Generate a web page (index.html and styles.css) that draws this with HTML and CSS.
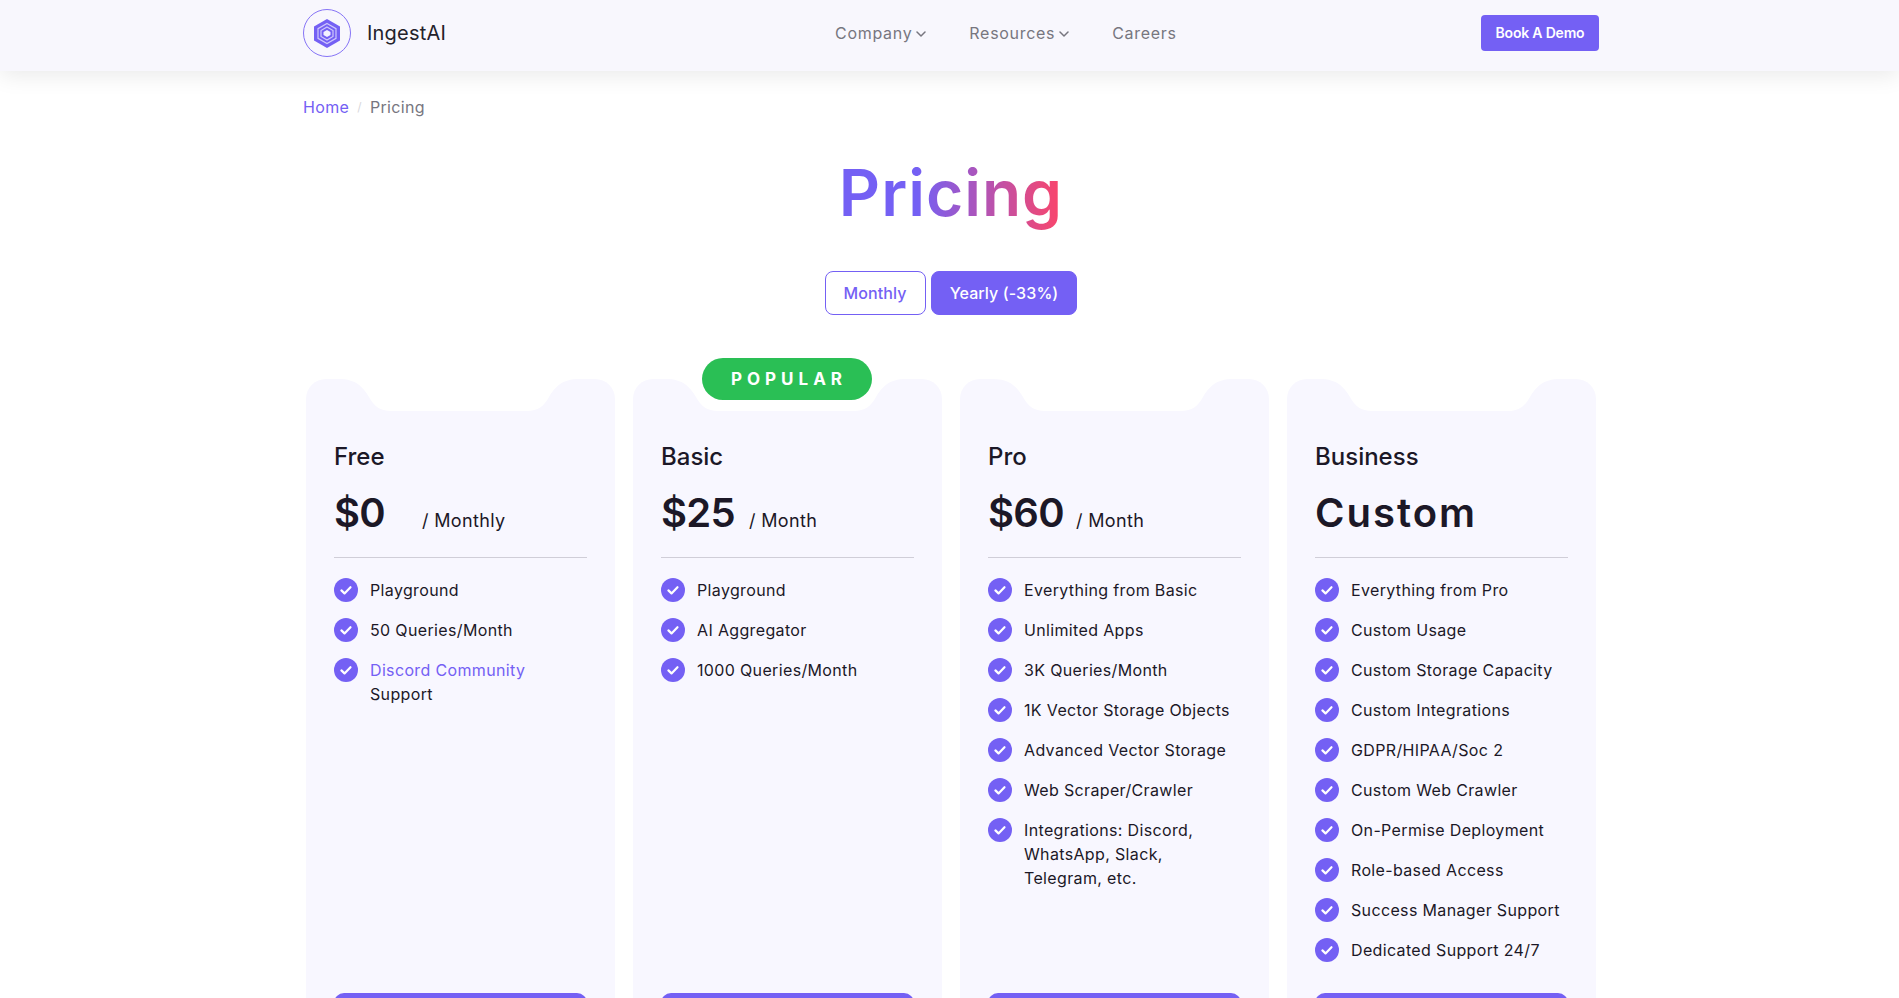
FILE: index.html
```html
<!DOCTYPE html>
<html lang="en">
<head>
  <meta charset="UTF-8">
  <meta name="viewport" content="width=device-width, initial-scale=1.0">
  <title>Pricing - IngestAI</title>
  <link rel="stylesheet" href="styles.css">
</head>
<body>
  <svg class="sprite" aria-hidden="true">
    <symbol id="check" viewBox="0 0 24 24">
      <circle cx="12" cy="12" r="12" fill="#7460f4"/>
      <path d="M7.4 12.4l3.1 3 6-6.2" fill="none" stroke="#fff" stroke-width="2.2" stroke-linecap="round" stroke-linejoin="round"/>
    </symbol>
    <symbol id="chevron" viewBox="0 0 10 6">
      <path d="M1 1l4 4 4-4" fill="none" stroke="currentColor" stroke-width="1.5" stroke-linecap="round" stroke-linejoin="round"/>
    </symbol>
    <symbol id="notch" viewBox="0 0 240 32" preserveAspectRatio="none">
      <path d="M0 0C17 0 24 8 30 18C35 27 41 32 52 32H188C199 32 205 27 210 18C216 8 223 0 240 0Z" fill="#fff"/>
    </symbol>
  </svg>

  <header class="topbar">
    <div class="topbar-inner">
      <a class="brand" href="#">
        <span class="brand-mark">
          <svg viewBox="0 0 26 29" width="26" height="29">
            <path d="M13 0l13 7.500v14L13 29 0 21.500v-14z" fill="#7460f4"/>
            <path d="M13 4.500l9 5.200v9.600l-9 5.200-9-5.200V9.700z" fill="none" stroke="#cfc8fc" stroke-width="1.200"/>
            <path d="M13 8l6 3.500v6L13 21l-6-3.500v-6z" fill="none" stroke="#cfc8fc" stroke-width="1.200"/>
            <path d="M13 11l3.500 2v3L13 18l-3.500-2v-3z" fill="#f3f1ff"/>
          </svg>
        </span>
        <span class="brand-name">IngestAI</span>
      </a>
      <nav class="nav">
        <a href="#">Company <svg class="chevron"><use href="#chevron"/></svg></a>
        <a href="#">Resources <svg class="chevron"><use href="#chevron"/></svg></a>
        <a href="#">Careers</a>
      </nav>
      <a class="demo-btn" href="#">Book A Demo</a>
    </div>
  </header>

  <main class="page">
    <div class="breadcrumb">
      <a href="#">Home</a>
      <span class="sep">/</span>
      <span class="current">Pricing</span>
    </div>

    <h1 class="page-title"><span>Pricing</span></h1>

    <div class="toggle">
      <button class="toggle-btn">Monthly</button>
      <button class="toggle-btn active">Yearly (-33%)</button>
    </div>

    <section class="plans">
      <article class="plan">
        <svg class="notch"><use href="#notch"/></svg>
        <h2 class="plan-name">Free</h2>
        <div class="plan-price"><strong>$0</strong><span>/ Monthly</span></div>
        <ul class="features">
          <li><svg class="tick"><use href="#check"/></svg><span>Playground</span></li>
          <li><svg class="tick"><use href="#check"/></svg><span>50 Queries/Month</span></li>
          <li><svg class="tick"><use href="#check"/></svg><span><a href="#">Discord Community</a> Support</span></li>
        </ul>
        <a class="plan-btn" href="#"></a>
      </article>

      <article class="plan">
        <svg class="notch"><use href="#notch"/></svg>
        <div class="badge">POPULAR</div>
        <h2 class="plan-name">Basic</h2>
        <div class="plan-price"><strong>$25</strong><span>/ Month</span></div>
        <ul class="features">
          <li><svg class="tick"><use href="#check"/></svg><span>Playground</span></li>
          <li><svg class="tick"><use href="#check"/></svg><span>AI Aggregator</span></li>
          <li><svg class="tick"><use href="#check"/></svg><span>1000 Queries/Month</span></li>
        </ul>
        <a class="plan-btn" href="#"></a>
      </article>

      <article class="plan">
        <svg class="notch"><use href="#notch"/></svg>
        <h2 class="plan-name">Pro</h2>
        <div class="plan-price"><strong>$60</strong><span>/ Month</span></div>
        <ul class="features">
          <li><svg class="tick"><use href="#check"/></svg><span>Everything from Basic</span></li>
          <li><svg class="tick"><use href="#check"/></svg><span>Unlimited Apps</span></li>
          <li><svg class="tick"><use href="#check"/></svg><span>3K Queries/Month</span></li>
          <li><svg class="tick"><use href="#check"/></svg><span>1K Vector Storage Objects</span></li>
          <li><svg class="tick"><use href="#check"/></svg><span>Advanced Vector Storage</span></li>
          <li><svg class="tick"><use href="#check"/></svg><span>Web Scraper/Crawler</span></li>
          <li><svg class="tick"><use href="#check"/></svg><span>Integrations: Discord, WhatsApp, Slack, Telegram, etc.</span></li>
        </ul>
        <a class="plan-btn" href="#"></a>
      </article>

      <article class="plan">
        <svg class="notch"><use href="#notch"/></svg>
        <h2 class="plan-name">Business</h2>
        <div class="plan-price"><strong class="custom">Custom</strong></div>
        <ul class="features">
          <li><svg class="tick"><use href="#check"/></svg><span>Everything from Pro</span></li>
          <li><svg class="tick"><use href="#check"/></svg><span>Custom Usage</span></li>
          <li><svg class="tick"><use href="#check"/></svg><span>Custom Storage Capacity</span></li>
          <li><svg class="tick"><use href="#check"/></svg><span>Custom Integrations</span></li>
          <li><svg class="tick"><use href="#check"/></svg><span>GDPR/HIPAA/Soc 2</span></li>
          <li><svg class="tick"><use href="#check"/></svg><span>Custom Web Crawler</span></li>
          <li><svg class="tick"><use href="#check"/></svg><span>On-Permise Deployment</span></li>
          <li><svg class="tick"><use href="#check"/></svg><span>Role-based Access</span></li>
          <li><svg class="tick"><use href="#check"/></svg><span>Success Manager Support</span></li>
          <li><svg class="tick"><use href="#check"/></svg><span>Dedicated Support 24/7</span></li>
        </ul>
        <a class="plan-btn" href="#"></a>
      </article>
    </section>
  </main>
</body>
</html>
```

FILE: styles.css
```css
:root {
    --primary: #7460f4;
    --ink: #1c1827;
    --muted: #77767f;
    --soft: #f8f7ff;
}

html, body {
    height: 100vh;
    overflow: hidden; /* the cards run past the fold */
}

body {
    margin: 0;
    font-family: 'Inter', sans-serif;
    font-size: 16px;
    line-height: 24px;
    color: var(--ink);
    background: #fff;
    letter-spacing: 0.35px;
}

a {
    text-decoration: none;
    color: inherit;
}

.sprite {
    display: none;
}

/* Top bar */
.topbar {
    height: 71px;
    background: #f8f7fd;
    box-shadow: 0 4px 22px rgba(0, 0, 0, 0.09);
}

.topbar-inner {
    display: grid;
    grid-template-columns: 532px 1fr auto;
    align-items: center;
    height: 66px;
    padding: 0 300px 0 303px;
}

.brand {
    display: flex;
    align-items: center;
    gap: 16px;
}

.brand-mark {
    display: flex;
    align-items: center;
    justify-content: center;
    box-sizing: border-box;
    width: 48px;
    height: 48px;
    border: 1px solid #8674f6;
    border-radius: 50%;
}

.brand-name {
    font-size: 20px;
    color: #24222b;
    letter-spacing: 0.2px;
}

.nav {
    display: flex;
    gap: 43px;
    color: var(--muted);
    letter-spacing: 0.7px;
}

.nav a {
    display: flex;
    align-items: center;
    gap: 4px;
}

.chevron {
    width: 10px;
    height: 6px;
    margin-top: 2px;
}

.demo-btn {
    display: flex;
    align-items: center;
    justify-content: center;
    width: 118px;
    height: 36px;
    border-radius: 4px;
    background: var(--primary);
    color: #fff;
    font-size: 14px;
    font-weight: 600;
    letter-spacing: -0.2px;
}

/* Page head */
.page {
    padding: 24px 300px 0 303px;
}

.breadcrumb {
    display: flex;
    gap: 8px;
}

.breadcrumb a {
    color: var(--primary);
}

.breadcrumb .sep {
    color: #d8d8dc;
    font-size: 12px;
}

.breadcrumb .current {
    color: var(--muted);
}

.page-title {
    margin: 34px 0 38px;
    font-size: 64px;
    line-height: 80px;
    font-weight: 600;
    text-align: center;
    letter-spacing: 1px;
}

.page-title span {
    background: linear-gradient(90deg, var(--primary) 35%, #fc4569 100%);
    -webkit-background-clip: text;
    background-clip: text;
    color: transparent;
}

.toggle {
    display: flex;
    justify-content: center;
    gap: 5px;
    margin-bottom: 64px;
}

.toggle-btn {
    height: 44px;
    padding: 0 18px;
    border: 1px solid var(--primary);
    border-radius: 8px;
    background: #fff;
    color: var(--primary);
    font-family: inherit;
    font-size: 16px;
    font-weight: 500;
    letter-spacing: 0.1px;
}

.toggle-btn.active {
    background: var(--primary);
    color: #fff;
}

/* Plans */
.plans {
    display: grid;
    grid-template-columns: repeat(4, 309px);
    gap: 18px;
    margin-left: 3px;
}

.plan {
    position: relative;
    display: flex;
    flex-direction: column;
    padding: 62px 28px 0;
    border-radius: 20px 20px 0 0;
    background: var(--soft);
}

.notch {
    position: absolute;
    top: 0;
    left: 33px;
    width: 240px;
    height: 32px;
}

.badge {
    position: absolute;
    top: -21px;
    left: 69px;
    width: 170px;
    height: 42px;
    border-radius: 21px;
    background: #2abf55;
    color: #fff;
    font-size: 17px;
    font-weight: 700;
    line-height: 42px;
    text-align: center;
    text-indent: 4px;
    letter-spacing: 5px;
}

.plan-name {
    margin: 0 0 16px;
    font-size: 24px;
    line-height: 32px;
    font-weight: 500;
    letter-spacing: 0;
}

.plan-price {
    display: flex;
    align-items: baseline;
    gap: 16px;
    height: 48px;
    padding-bottom: 20px;
    border-bottom: 1px solid #d0ced8;
    font-size: 18px;
}

.plan-price strong {
    width: 72px;
    font-size: 40px;
    line-height: 48px;
    font-weight: 600;
    letter-spacing: -0.7px;
}

.plan-price .custom {
    width: auto;
    letter-spacing: 2px;
}

.features {
    flex: 1;
    margin: 20px 0 15px;
    padding: 0;
    list-style: none;
}

.features li {
    display: flex;
    gap: 12px;
    margin-bottom: 16px;
}

.features a {
    color: var(--primary);
}

.tick {
    flex: none;
    width: 24px;
    height: 24px;
}

.plan-btn {
    display: block;
    height: 48px;
    border-radius: 10px;
    background: var(--primary);
}
```
